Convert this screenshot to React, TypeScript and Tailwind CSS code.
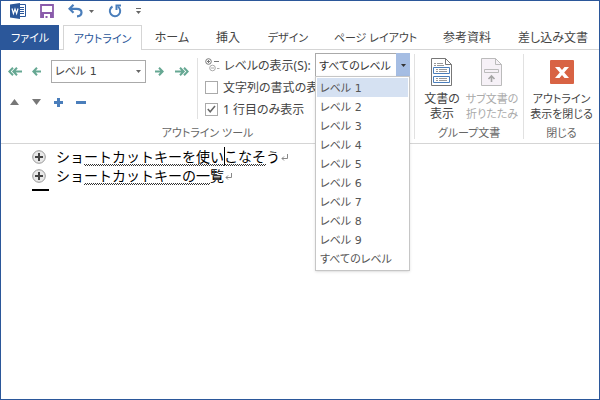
import React from 'react';

const TABS = [
  { label: 'ホーム', style: 'w-[60px] text-[12px]' },
  { label: '挿入', style: 'w-[52px] text-[12px]' },
  { label: 'デザイン', style: 'w-[68px] text-[11px]' },
  { label: 'ページ レイアウト', style: 'w-[107px] text-[11px]' },
  { label: '参考資料', style: 'w-[76px] text-[12px]' },
  { label: '差し込み文書', style: 'w-[96px] text-[12px]' },
];

const LEVELS = [
  'レベル 1',
  'レベル 2',
  'レベル 3',
  'レベル 4',
  'レベル 5',
  'レベル 6',
  'レベル 7',
  'レベル 8',
  'レベル 9',
  'すべてのレベル',
];

const WordLogo: React.FC = () => (
  <svg width="16" height="16" viewBox="0 0 16 16" aria-hidden="true">
    <path d="M9 1.500h6.500v12H9z" fill="#fff" stroke="#2b579a" />
    <path d="M10 4.500h4M10 6.500h4M10 8.500h4M10 10.500h4" stroke="#2b579a" />
    <path d="M0 1.500 10 0v16L0 14.500z" fill="#2b579a" />
    <path d="m2 5.500 1.400 5L5 6l1.600 4.500L8 5.500" fill="none" stroke="#fff" strokeWidth="1.200" />
  </svg>
);

const SaveIcon: React.FC = () => (
  <svg width="14" height="14" viewBox="0 0 14 14" aria-hidden="true">
    <path d="M1 1h12v12H1z" fill="none" stroke="#8a5bab" strokeWidth="1.800" />
    <path d="M1 8h12v5H1z" fill="#8a5bab" />
    <path d="M4 10h6v4H7.500v-2h-2v2H4z" fill="#fff" />
  </svg>
);

const UndoIcon: React.FC = () => (
  <svg width="15" height="14" viewBox="0 0 15 14" fill="none" stroke="#4a7ebb" strokeWidth="2.200" aria-hidden="true">
    <path d="M5.500.800 1.500 4.800l4 4M2 4.800h6.500c3 0 5 1.600 5 3.800 0 2.200-1.800 3.600-4.500 3.800" />
  </svg>
);

const RedoIcon: React.FC = () => (
  <svg width="14" height="14" viewBox="0 0 14 14" fill="none" stroke="#4a7ebb" strokeWidth="2" aria-hidden="true">
    <path d="M4.500 2.500a5.200 5.200 0 1 0 5.500.300" />
    <path d="M13 1.500H8.500V6" />
  </svg>
);

const Caret: React.FC<{ className?: string }> = ({ className }) => (
  <svg width="5" height="3" viewBox="0 0 5 3" className={className} aria-hidden="true">
    <path d="M0 0h5L2.500 3z" fill="currentColor" />
  </svg>
);

const Arrow: React.FC<{ double?: boolean; right?: boolean; label: string }> = ({ double, right, label }) => (
  <button type="button" aria-label={label}>
    <svg
      width={double ? 14 : 9}
      height="9"
      viewBox={double ? '0 0 14 9' : '0 0 9 9'}
      fill="none"
      stroke="#66a893"
      strokeWidth="2"
      className={right ? '-scale-x-100' : ''}
    >
      <path d={double ? 'M5 .700 1.300 4.500 5 8.300M9 .700 5.300 4.500 9 8.300M6 4.500h8' : 'M5 .700 1.300 4.500 5 8.300M2 4.500h7'} />
    </svg>
  </button>
);

const LevelIcon: React.FC = () => (
  <svg width="15" height="14" viewBox="0 0 15 14" fill="none" stroke="#777" aria-hidden="true">
    <circle cx="3.500" cy="3.500" r="2.800" />
    <path d="M2 3.500h3M3.500 2v3M9 3.500h5" />
    <g stroke="#aaa">
      <circle cx="7.500" cy="10" r="2.800" />
      <path d="M6 10h3M12 10.500h2.500" />
    </g>
  </svg>
);

const ShowDocumentIcon: React.FC = () => (
  <svg width="22" height="28" viewBox="0 0 22 28" fill="none" aria-hidden="true">
    <path d="M.500.500h14l6 6v21H.500z" fill="#fff" stroke="#777" />
    <path d="M14.500.500v6h6" stroke="#777" />
    <path d="M3 5.500h2M6 5.500h6M3 7.500h2M6 7.500h7" stroke="#999" />
    <path d="M2.500 9.500h16v6h-16zM2.500 18.500h16v6h-16z" stroke="#4a7ebb" />
    <path d="M5 11.500h2M8 11.500h8M5 13.500h2M8 13.500h8M5 20.500h2M8 20.500h8M5 22.500h2M8 22.500h8" stroke="#999" />
  </svg>
);

const CollapseIcon: React.FC = () => (
  <svg width="22" height="28" viewBox="0 0 22 28" fill="none" aria-hidden="true">
    <path d="M.500.500h14l6 6v21H.500z" fill="#f6f1f7" stroke="#bbb" />
    <path d="M14.500.500v6h6M3.500 11.500h14v3h-14z" stroke="#bbb" />
    <path d="M10.500 24v-6M7.500 21l3-3 3 3" stroke="#a5a5a5" strokeWidth="1.600" />
  </svg>
);

const CloseIcon: React.FC = () => (
  <svg width="24" height="24" viewBox="0 0 24 24" aria-hidden="true">
    <rect width="24" height="24" rx="1" fill="#d86344" />
    <path d="M5 7h4.500l2.500 3 2.500-3H19l-4.800 5.500L19 18h-4.500L12 15l-2.500 3H5l4.800-5.500z" fill="#fff" />
  </svg>
);

// Proofing mark: a two-row checker under the text
const Marked: React.FC<{ children: React.ReactNode }> = ({ children }) => (
  <span className="bg-[repeating-conic-gradient(#333_0_25%,transparent_0_50%)] bg-[length:2px_2px] bg-bottom bg-repeat-x">
    {children}
  </span>
);

const HeadingLine: React.FC<{ plain: string; marked: string; after?: string; rest: string }> = ({
  plain,
  marked,
  after,
  rest,
}) => (
  <div className="flex h-[19px] items-center">
    <svg width="14" height="14" viewBox="0 0 14 14" className="mr-[10px]" aria-hidden="true">
      <circle cx="7" cy="7" r="6.300" fill="#e8e8e8" stroke="#999" />
      <path d="M7 3v8M3 7h8" stroke="#444" strokeWidth="2" />
    </svg>
    <p className="text-[14px] leading-[19px] text-black">
      {plain}
      <Marked>{marked}</Marked>
      {after && (
        <>
          <span className="relative">
            <span className="absolute top-0 left-0 h-[18px] w-px bg-black" />
          </span>
          <Marked>{after}</Marked>
        </>
      )}
      {rest}
    </p>
    <svg width="7" height="7" viewBox="0 0 7 7" fill="none" stroke="#888" className="mt-px ml-px" aria-hidden="true">
      <path d="M6.500 0v4.500H1M3 2.500l-2 2 2 2" />
    </svg>
  </div>
);

export default function App() {
  return (
    <div className="flex min-h-screen flex-col overflow-hidden border border-[#2b579a] bg-white font-['Noto_Sans','Noto_Sans_CJK_JP',sans-serif] text-[12px] leading-[15px] text-[#444]">
      <header className="flex h-6 items-center pb-1 pl-[9px]">
        <WordLogo />
        <button type="button" aria-label="上書き保存" className="ml-[14px]">
          <SaveIcon />
        </button>
        <button type="button" aria-label="元に戻す" className="ml-[14px] flex items-center gap-[6px] text-[#666]">
          <UndoIcon />
          <Caret />
        </button>
        <button type="button" aria-label="繰り返し" className="ml-[14px]">
          <RedoIcon />
        </button>
        <button type="button" aria-label="クイック アクセス" className="ml-[14px] flex flex-col gap-[2px] text-[#666]">
          <span className="h-px w-[5px] bg-[#666]" />
          <Caret />
        </button>
      </header>

      <nav className="flex h-[25px] shrink-0 whitespace-nowrap [font-feature-settings:'palt']">
        <button type="button" className="w-[58px] shrink-0 bg-[#2b579a] text-[11px] text-white">
          ファイル
        </button>
        <span className="w-1 shrink-0 border-b border-[#d5d5d5]" />
        <button
          type="button"
          className="w-[79px] shrink-0 border-x border-t border-[#d5d5d5] text-[11px] text-[#2b579a]"
        >
          アウトライン
        </button>
        {TABS.map((tab) => (
          <button key={tab.label} type="button" className={`${tab.style} shrink-0 border-b border-[#d5d5d5]`}>
            {tab.label}
          </button>
        ))}
        <span className="flex-1 border-b border-[#d5d5d5]" />
      </nav>

      <section className="flex h-[94px] border-b border-[#d5d5d5] whitespace-nowrap [font-feature-settings:'palt']">
        <div className="my-1 flex w-[414px] shrink-0 flex-col border-r border-[#e1e1e1]">
          <div className="flex h-[73px]">
            <div className="mt-1 mb-2 w-[197px] border-r border-[#e1e1e1] pl-[7px]">
              <div className="flex h-[27px] items-center">
                <Arrow double label="見出し 1 に変更" />
                <span className="w-[10px]" />
                <Arrow label="レベル上げ" />
                <div className="relative mr-[9px] ml-[10px] flex w-[95px] items-center text-[#666]">
                  <select
                    aria-label="アウトライン レベル"
                    className="h-[23px] w-full appearance-none border border-[#aaa] bg-white pl-[3px] font-['DejaVu_Sans','Noto_Sans_CJK_JP',sans-serif] text-[11px] text-[#444]"
                  >
                    {LEVELS.slice(0, 9).map((level) => (
                      <option key={level}>{level}</option>
                    ))}
                  </select>
                  <Caret className="pointer-events-none absolute right-[5px]" />
                </div>
                <Arrow right label="レベル下げ" />
                <span className="w-[11px]" />
                <Arrow double right label="標準文字列" />
              </div>
              <div className="flex h-[34px] items-center gap-[13px] pl-[2px]">
                <button type="button" aria-label="1 つ上のレベルへ移動">
                  <svg width="9" height="6" viewBox="0 0 9 6">
                    <path d="M0 6h9L4.500 0z" fill="#777" />
                  </svg>
                </button>
                <button type="button" aria-label="1 つ下のレベルへ移動">
                  <svg width="9" height="6" viewBox="0 0 9 6">
                    <path d="M0 0h9L4.500 6z" fill="#777" />
                  </svg>
                </button>
                <button type="button" aria-label="展開">
                  <svg width="9" height="9" viewBox="0 0 9 9">
                    <path d="M3 0h3v3h3v3H6v3H3V6H0V3h3z" fill="#4a7ebb" />
                  </svg>
                </button>
                <button type="button" aria-label="折りたたみ">
                  <svg width="10" height="9" viewBox="0 0 10 9">
                    <path d="M0 3h10v3H0z" fill="#4a7ebb" />
                  </svg>
                </button>
              </div>
            </div>

            <div className="flex flex-1 flex-col pl-[7px]">
              <div className="flex h-[22px] items-center">
                <LevelIcon />
                <label htmlFor="show-level" className="ml-1 w-[91px]">
                  レベルの表示(S):
                </label>
                <div className="relative flex w-[95px]">
                  <select
                    id="show-level"
                    defaultValue="すべてのレベル"
                    className="h-6 w-[81px] appearance-none border border-r-0 border-[#aaa] bg-white pl-[3px] text-[11px] text-[#333]"
                  >
                    {LEVELS.map((level) => (
                      <option key={level}>{level}</option>
                    ))}
                  </select>
                  <span className="flex w-[14px] items-center justify-center bg-[#a5bde3] text-[#333]">
                    <Caret />
                  </span>
                  <ul
                    role="listbox"
                    aria-label="レベル"
                    className="absolute top-[23px] left-0 z-10 w-[95px] border border-[#c6c6c6] bg-white p-px pb-[2px] font-['DejaVu_Sans','Noto_Sans_CJK_JP',sans-serif] text-[11px] text-[#555] shadow-sm"
                  >
                    {LEVELS.map((level, i) => (
                      <li
                        key={level}
                        role="option"
                        aria-selected={i === 0}
                        className="h-[19px] pl-[3px] leading-[21px] aria-selected:bg-[#d5e1f2]"
                      >
                        {level}
                      </li>
                    ))}
                  </ul>
                </div>
              </div>
              <label className="flex h-[22px] items-center gap-[5px]">
                <input type="checkbox" className="size-[13px] shrink-0 appearance-none border border-[#aaa] bg-white" />
                文字列の書式の表示
              </label>
              <label className="relative flex h-[22px] items-center gap-[5px]">
                <input
                  type="checkbox"
                  defaultChecked
                  className="size-[13px] shrink-0 appearance-none border border-[#aaa] bg-white"
                />
                <svg width="9" height="8" viewBox="0 0 9 8" fill="none" className="pointer-events-none absolute left-[2px]">
                  <path d="m.800 4 2.400 2.800L8 1" stroke="#666" strokeWidth="1.500" />
                </svg>
                1 行目のみ表示
              </label>
            </div>
          </div>
          <p className="text-center text-[11px] leading-[12px] text-[#666]">アウトライン ツール</p>
        </div>

        <div className="my-1 flex w-[109px] shrink-0 flex-col border-r border-[#e1e1e1]">
          <div className="flex h-[73px] justify-center pt-1">
            <button type="button" className="flex w-[46px] flex-col items-center gap-[5px]">
              <ShowDocumentIcon />
              <span>
                文書の
                <br />
                表示
              </span>
            </button>
            <button
              type="button"
              disabled
              className="flex w-[54px] flex-col items-center gap-[5px] text-[11px] leading-[15px] text-[#aaa]"
            >
              <CollapseIcon />
              <span>
                サブ文書の
                <br />
                折りたたみ
              </span>
            </button>
          </div>
          <p className="text-center text-[11px] leading-[12px] text-[#666]">グループ文書</p>
        </div>

        <div className="my-1 flex flex-1 flex-col">
          <div className="flex h-[73px] justify-center pt-[6px]">
            <button type="button" className="flex flex-col items-center gap-[7px] text-[11px] leading-[15px]">
              <CloseIcon />
              <span>
                アウトライン
                <br />
                表示を閉じる
              </span>
            </button>
          </div>
          <p className="text-center text-[11px] leading-[12px] text-[#666]">閉じる</p>
        </div>
      </section>

      <main className="flex-1 pt-[3px] pl-[31px]">
        <HeadingLine plain="ショ" marked="ートカットキーを使い" after="こなそ" rest="う" />
        <HeadingLine plain="ショ" marked="ートカットキーの一" rest="覧" />
        <div className="mt-1 h-[2px] w-[17px] bg-black" />
      </main>
    </div>
  );
}
